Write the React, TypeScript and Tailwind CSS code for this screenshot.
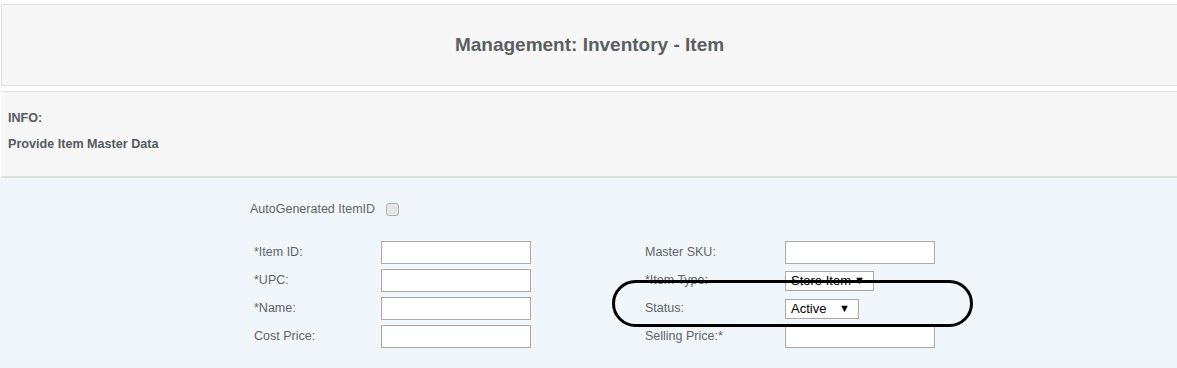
import React from 'react';

const font = { fontFamily: '"Liberation Sans", Arial, sans-serif' };

const leftRows = ['*Item ID:', '*UPC:', '*Name:', 'Cost Price:'];

const TextBox: React.FC = () => (
    <div className="w-[150px] h-[23px] bg-white border border-[#a9a9a9]" />
);

const Select: React.FC<{ value: string; width: string }> = ({ value, width }) => (
    <div className={`${width} h-[20px] bg-white border border-[#a9a9a9] flex items-center justify-between pl-[5px] pr-[8px] text-[13px] text-black whitespace-nowrap`}>
        <span>{value}</span>
        <span className="text-[11px] leading-none">▼</span>
    </div>
);

const App: React.FC = () => {
    return (
        <div className="relative w-full h-[368px] bg-white pt-[4px] overflow-hidden" style={font}>
            {/* Header */}
            <div className="ml-[1px] h-[82px] bg-[#f7f7f7] border border-r-0 border-[#e2e2e2] flex items-center justify-center">
                <h1 className="text-[19px] font-bold text-[#5a5f63]">Management: Inventory - Item</h1>
            </div>

            {/* Info */}
            <div className="mt-[5px] ml-[1px] h-[87px] bg-[#f7f7f7] border-t border-[#e2e2e2] border-b-2 border-b-[#dce1de] pl-[7px] pt-[18px] text-[12.6px] font-bold text-[#555b5f]">
                <div className="h-[16px] leading-[16px]">INFO:</div>
                <div className="mt-[10px] h-[16px] leading-[16px]">Provide Item Master Data</div>
            </div>

            {/* Form panel */}
            <div className="h-[200px] bg-[#f1f6fb] pl-[250px] pt-[24px] text-[12.5px] text-[#606468]">
                <div className="h-[14px] flex items-center">
                    <span>AutoGenerated ItemID</span>
                    <span className="ml-[11px] w-[13px] h-[13px] rounded-[3px] border border-[#b4b4b4] bg-[#e6e6e6]" />
                </div>

                <div className="mt-[25px] ml-[4px] flex">
                    <div className="w-[391px] flex flex-col gap-[5px]">
                        {leftRows.map(label => (
                            <div key={label} className="h-[23px] flex items-center">
                                <span className="w-[127px]">{label}</span>
                                <TextBox />
                            </div>
                        ))}
                    </div>
                    <div className="flex flex-col gap-[5px]">
                        <div className="h-[23px] flex items-center">
                            <span className="w-[140px]">Master SKU:</span>
                            <TextBox />
                        </div>
                        <div className="h-[23px] flex items-center">
                            <span className="w-[140px]">*Item Type:</span>
                            <Select value="Store Item" width="w-[89px]" />
                        </div>
                        <div className="h-[23px] flex items-center">
                            <span className="w-[140px]">Status:</span>
                            <Select value="Active" width="w-[74px]" />
                        </div>
                        <div className="h-[23px] flex items-center">
                            <span className="w-[140px]">Selling Price:*</span>
                            <TextBox />
                        </div>
                    </div>
                </div>
            </div>

            {/* Annotation circle */}
            <div className="absolute left-[612px] top-[280px] w-[361px] h-[47px] border-[3px] border-black rounded-full" />
        </div>
    );
};

export default App;
